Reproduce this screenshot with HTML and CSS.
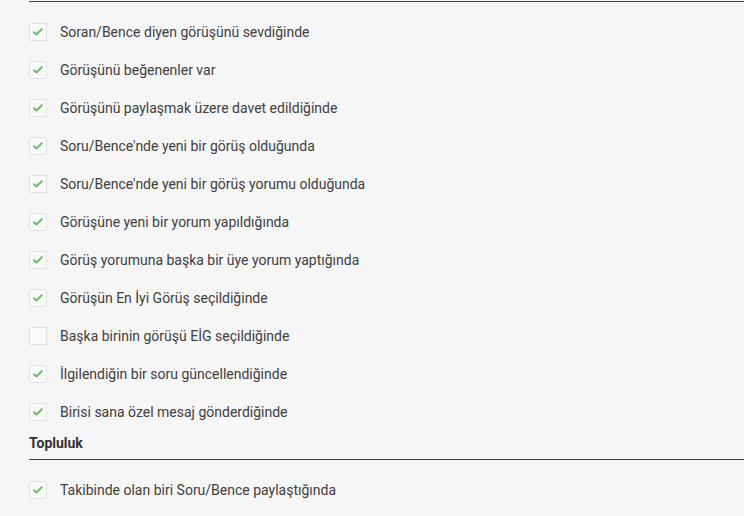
FILE: index.html
```html
<!DOCTYPE html>
<html lang="tr">
<head>
<meta charset="utf-8">
<link rel="stylesheet" href="styles.css">
</head>
<body>
<div class="page">
  <section class="group">
    <ul class="opts">
      <li class="opt"><span class="cb on"><svg viewBox="0 0 18 18"><path d="M4.5 9.2l2.8 2.6 6-6"/></svg></span><span class="lbl">Soran/Bence diyen görüşünü sevdiğinde</span></li>
      <li class="opt"><span class="cb on"><svg viewBox="0 0 18 18"><path d="M4.5 9.2l2.8 2.6 6-6"/></svg></span><span class="lbl">Görüşünü beğenenler var</span></li>
      <li class="opt"><span class="cb on"><svg viewBox="0 0 18 18"><path d="M4.5 9.2l2.8 2.6 6-6"/></svg></span><span class="lbl">Görüşünü paylaşmak üzere davet edildiğinde</span></li>
      <li class="opt"><span class="cb on"><svg viewBox="0 0 18 18"><path d="M4.5 9.2l2.8 2.6 6-6"/></svg></span><span class="lbl">Soru/Bence'nde yeni bir görüş olduğunda</span></li>
      <li class="opt"><span class="cb on"><svg viewBox="0 0 18 18"><path d="M4.5 9.2l2.8 2.6 6-6"/></svg></span><span class="lbl">Soru/Bence'nde yeni bir görüş yorumu olduğunda</span></li>
      <li class="opt"><span class="cb on"><svg viewBox="0 0 18 18"><path d="M4.5 9.2l2.8 2.6 6-6"/></svg></span><span class="lbl">Görüşüne yeni bir yorum yapıldığında</span></li>
      <li class="opt"><span class="cb on"><svg viewBox="0 0 18 18"><path d="M4.5 9.2l2.8 2.6 6-6"/></svg></span><span class="lbl">Görüş yorumuna başka bir üye yorum yaptığında</span></li>
      <li class="opt"><span class="cb on"><svg viewBox="0 0 18 18"><path d="M4.5 9.2l2.8 2.6 6-6"/></svg></span><span class="lbl">Görüşün En İyi Görüş seçildiğinde</span></li>
      <li class="opt"><span class="cb"></span><span class="lbl">Başka birinin görüşü EİG seçildiğinde</span></li>
      <li class="opt"><span class="cb on"><svg viewBox="0 0 18 18"><path d="M4.5 9.2l2.8 2.6 6-6"/></svg></span><span class="lbl">İlgilendiğin bir soru güncellendiğinde</span></li>
      <li class="opt"><span class="cb on"><svg viewBox="0 0 18 18"><path d="M4.5 9.2l2.8 2.6 6-6"/></svg></span><span class="lbl">Birisi sana özel mesaj gönderdiğinde</span></li>
    </ul>
  </section>
  <h3 class="heading">Topluluk</h3>
  <section class="group2">
    <ul class="opts">
      <li class="opt"><span class="cb on"><svg viewBox="0 0 18 18"><path d="M4.5 9.2l2.8 2.6 6-6"/></svg></span><span class="lbl">Takibinde olan biri Soru/Bence paylaştığında</span></li>
    </ul>
  </section>
</div>
</body>
</html>
```

FILE: styles.css
```css
html, body {
  margin: 0;
  padding: 0;
  background: #f6f6f6;
}
body {
  font-family: Roboto, "Noto Sans", sans-serif;
  font-size: 14px;
  color: #404040;
}
.page {
  padding-left: 29px;
  padding-top: 1px;
}
.group {
  border-top: 1px solid #444;
}
.opts {
  list-style: none;
  margin: 0;
  padding: 11px 0 0 0;
}
.opt {
  display: flex;
  align-items: center;
  height: 38px;
}
.cb {
  box-sizing: border-box;
  width: 18px;
  height: 18px;
  border: 1px solid #e2e2e2;
  border-radius: 2px;
  background: #fafafa;
  margin-right: 13px;
  flex: none;
  display: flex;
}
.cb svg {
  width: 16px;
  height: 16px;
}
.cb svg path {
  fill: none;
  stroke: #5cc35c;
  stroke-width: 2.2;
  stroke-linecap: round;
  stroke-linejoin: round;
}
.lbl {
  line-height: 18px;
}
.heading {
  margin: 0;
  padding: 3px 0 7px 0;
  font-size: 14px;
  line-height: 18px;
  font-weight: 700;
  color: #333;
  border-bottom: 1px solid #444;
}
.group2 .opts {
  padding-top: 11px;
}
```
